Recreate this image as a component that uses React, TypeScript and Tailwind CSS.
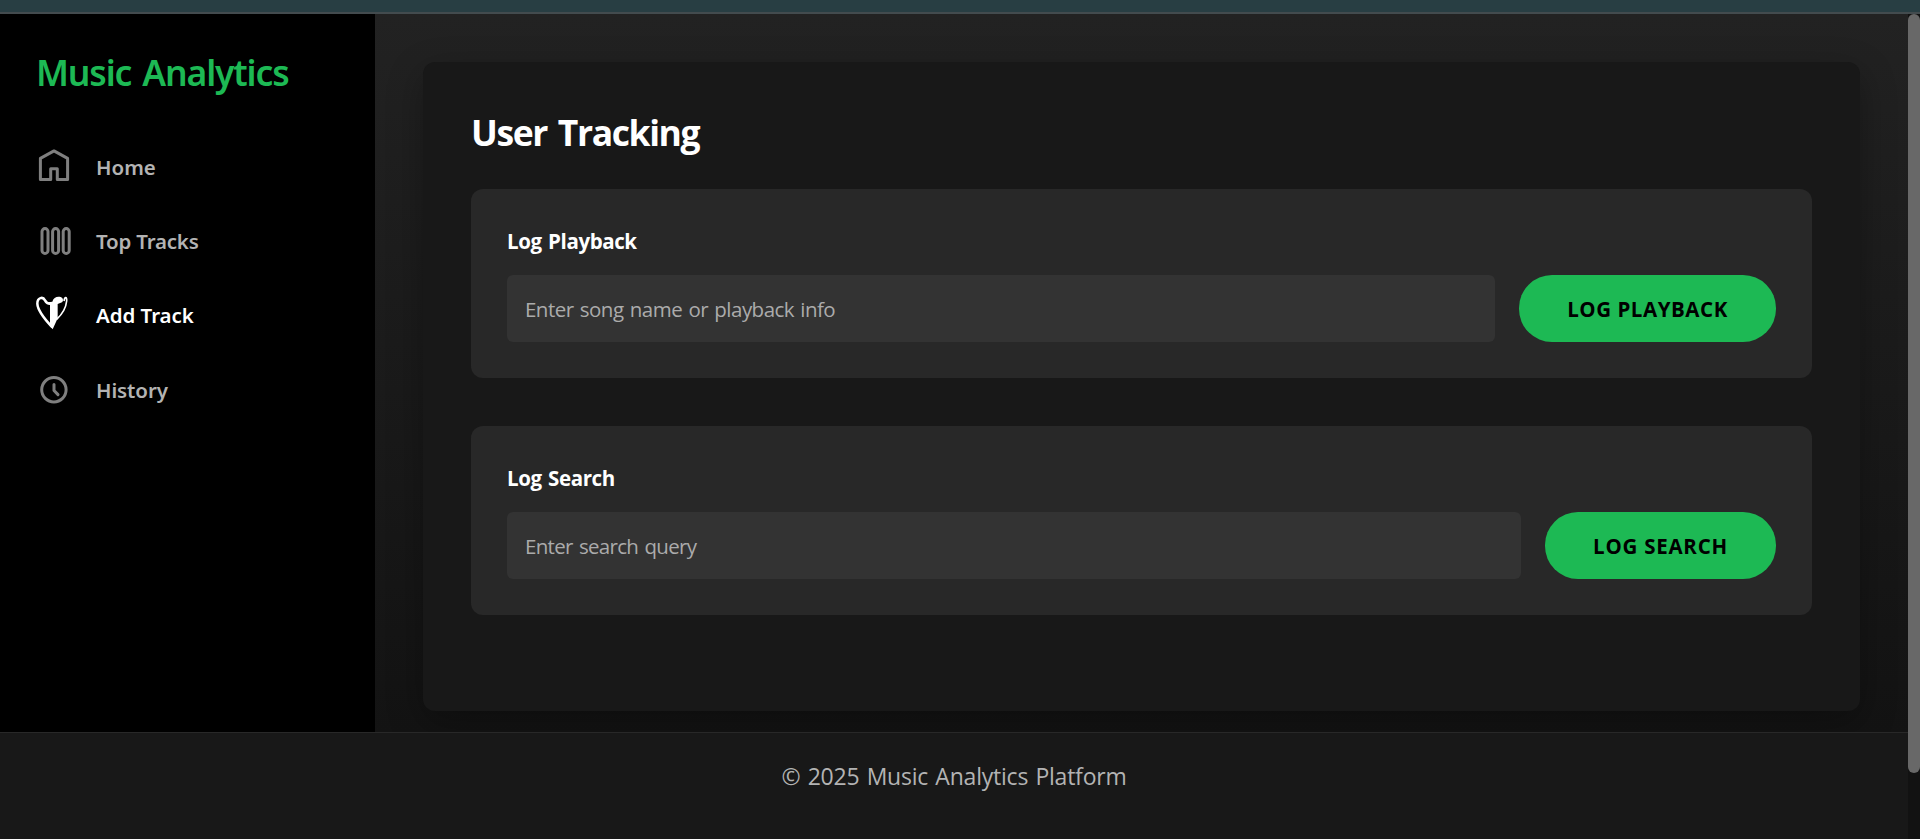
import React from "react";

const iconBox = "h-9 w-9 shrink-0 overflow-visible";

function HomeIcon() {
  return (
    <svg className={iconBox} viewBox="0 0 36 36" fill="none" stroke="#7f7f7f" strokeWidth="3" strokeLinejoin="round">
      <path d="M18 1.9 31.6 9.4V30.6H21.3V19.7H14.7V30.6H4.4V9.4Z" />
    </svg>
  );
}

function TracksIcon() {
  return (
    <svg className={iconBox} viewBox="0 0 36 36" fill="none" stroke="#7f7f7f" strokeWidth="3">
      <rect x="6" y="5.6" width="6" height="24.8" rx="3" />
      <rect x="16.6" y="5.6" width="6" height="24.8" rx="3" />
      <rect x="27.2" y="5.6" width="6" height="24.8" rx="3" />
    </svg>
  );
}

function HeartIcon() {
  return (
    <svg className={iconBox} viewBox="12 22 108 108" fill="none" stroke="#fff">
      <path d="M61 113C42 93 17 66 16 42C16 23 33 20 39 32C42 38 46 42 54 42" strokeWidth="7.5" />
      <path d="M48 38 61 36C64 23 76 19 86 22C94 25 95 33 90 38L77 43V86L62 119 54 108V46Z" fill="#fff" stroke="none" />
      <path d="M96 34C98 21 105 20 104 34C102 54 90 74 74 89" strokeWidth="5" />
    </svg>
  );
}

function ClockIcon() {
  return (
    <svg className={iconBox} viewBox="0 0 36 36" fill="none" stroke="#7f7f7f" strokeWidth="3" strokeLinecap="round">
      <circle cx="17.9" cy="17.8" r="12.2" />
      <path d="M18 12.6V18.5L22 22.6" strokeLinejoin="round" />
    </svg>
  );
}

const navItems = [
  { label: "Home", icon: <HomeIcon />, style: "text-[#b3b3b3] tracking-normal" },
  { label: "Top Tracks", icon: <TracksIcon />, style: "text-[#b3b3b3] tracking-[-0.2px]" },
  { label: "Add Track", icon: <HeartIcon />, style: "text-white tracking-[-0.05px]" },
  { label: "History", icon: <ClockIcon />, style: "text-[#b3b3b3] tracking-[-0.1px]" },
];

interface LogCardProps {
  title: string;
  placeholder: string;
  action: string;
  inputStyle: string;
  buttonStyle: string;
}

function LogCard({ title, placeholder, action, inputStyle, buttonStyle }: LogCardProps) {
  return (
    <section className="h-[189px] rounded-xl bg-[#282828] px-9 pt-9">
      <h3 className="mb-[18px] h-8 font-['Open_Sans'] text-[20.5px] leading-8 font-bold tracking-[-0.4px] text-white [word-spacing:1.5px]">{title}</h3>
      <div className="flex gap-6">
        <input
          placeholder={placeholder}
          className={`h-[67px] min-w-0 flex-1 rounded-md bg-[#333] pt-px pr-[18px] pl-[18px] font-['Open_Sans'] text-[20.5px] text-white outline-none placeholder:text-[#ababab] ${inputStyle}`}
        />
        <button className={`h-[67px] rounded-[33px] bg-[#1db954] pt-px font-['Open_Sans'] text-[20.5px] font-bold text-black ${buttonStyle}`}>
          {action}
        </button>
      </div>
    </section>
  );
}

export default function App() {
  return (
    <div className="flex h-[839px] w-full flex-col overflow-hidden bg-[#121212] font-['Noto_Sans',sans-serif]">
      <div className="h-[14px] shrink-0 border-b-2 border-[#434b4e] bg-[#283e43]" />
      <div className="flex min-h-0 flex-1">
        <div className="flex min-w-0 flex-1 flex-col">
          <div className="flex h-[718px] shrink-0 overflow-hidden">
            <aside className="w-[375px] shrink-0 bg-black px-9 pt-[34px]">
              <h1 className="h-[49px] text-[35.5px] leading-[49px] font-semibold whitespace-nowrap tracking-[-1.15px] text-[#1db954] [word-spacing:3px]">Music Analytics</h1>
              <nav className="mt-[52px] flex flex-col gap-[38.2px]">
                {navItems.map((item) => (
                  <a key={item.label} className={`flex h-9 items-center gap-6 text-[20.5px] leading-9 font-semibold ${item.style}`}>
                    {item.icon}
                    <span>{item.label}</span>
                  </a>
                ))}
              </nav>
            </aside>
            <main className="min-w-0 flex-1 bg-linear-to-b from-[#222] to-[#131313] p-12">
              <div className="h-[649px] rounded-xl bg-[#181818] px-12 pt-[46px] shadow-[0_12px_36px_rgba(0,0,0,0.3)]">
                <h2 className="mb-8 h-[49px] font-['Open_Sans'] text-[35.5px] leading-[49px] font-bold tracking-[-1.4px] text-white [word-spacing:3px]">User Tracking</h2>
                <div className="flex flex-col gap-12">
                  <LogCard title="Log Playback" placeholder="Enter song name or playback info" action="LOG PLAYBACK" inputStyle="tracking-[-0.53px] [word-spacing:1.5px]" buttonStyle="w-[257px] tracking-[0.55px]" />
                  <LogCard title="Log Search" placeholder="Enter search query" action="LOG SEARCH" inputStyle="tracking-[-0.68px] [word-spacing:1.5px]" buttonStyle="w-[231px] tracking-[0.75px]" />
                </div>
              </div>
            </main>
          </div>
          <footer className="flex-1 border-t border-[#282828] bg-[#181818] pt-[25px] text-center">
            <p className="font-['Open_Sans'] text-[23px] leading-9 tracking-[-0.22px] text-[#b3b3b3] [word-spacing:1.5px]">© 2025 Music Analytics Platform</p>
          </footer>
        </div>
        <div className="w-3 shrink-0 bg-[#121212]">
          <div className="h-[759px] rounded-full bg-[#686868]" />
        </div>
      </div>
    </div>
  );
}
